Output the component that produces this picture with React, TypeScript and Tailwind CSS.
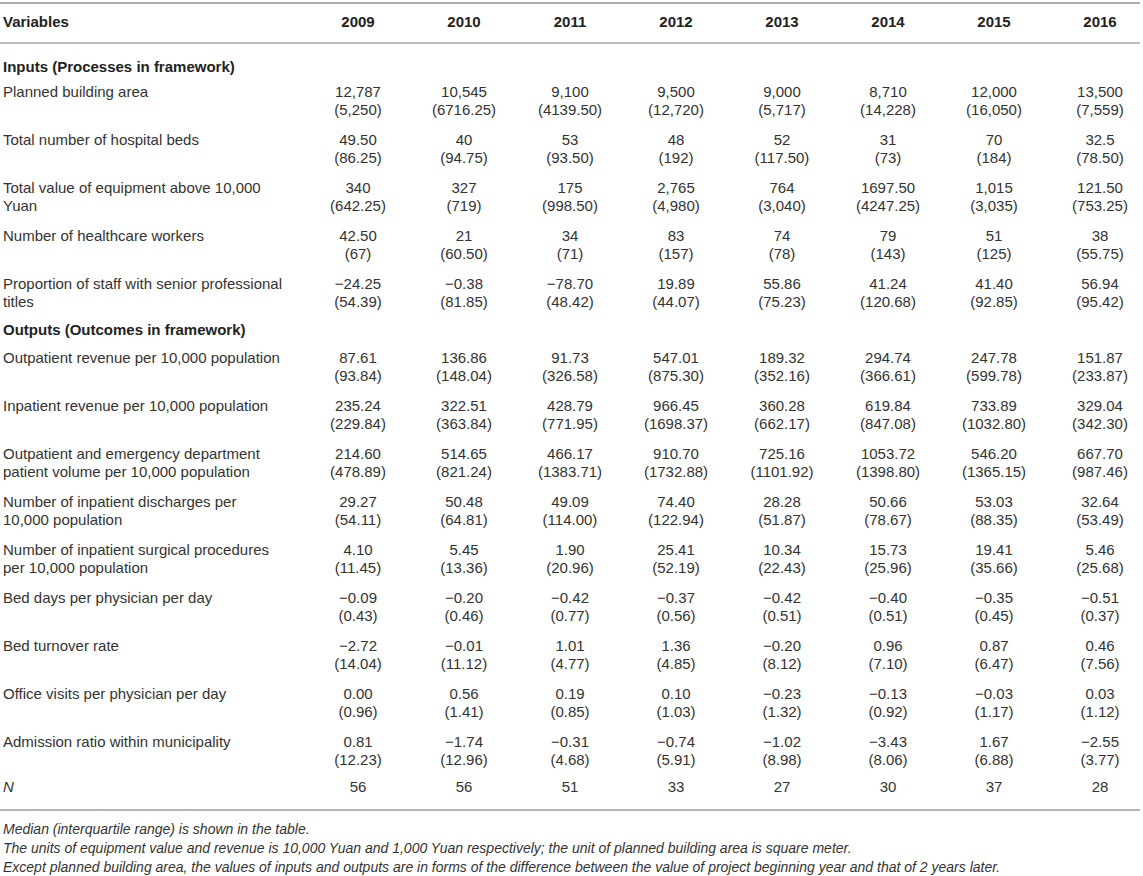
import React from "react";

type Row =
  | { kind: "section"; label: string; pt: string; pb: string }
  | { kind: "data"; label: string; v: [string, string][] }
  | { kind: "n"; label: string; v: string[] };

const years = ["2009", "2010", "2011", "2012", "2013", "2014", "2015", "2016"];

const rows: Row[] = [
  { kind: "section", label: "Inputs (Processes in framework)", pt: "pt-[14px]", pb: "pb-[1px]" },
  {
    kind: "data",
    label: "Planned building area",
    v: [["12,787", "(5,250)"], ["10,545", "(6716.25)"], ["9,100", "(4139.50)"], ["9,500", "(12,720)"], ["9,000", "(5,717)"], ["8,710", "(14,228)"], ["12,000", "(16,050)"], ["13,500", "(7,559)"]],
  },
  {
    kind: "data",
    label: "Total number of hospital beds",
    v: [["49.50", "(86.25)"], ["40", "(94.75)"], ["53", "(93.50)"], ["48", "(192)"], ["52", "(117.50)"], ["31", "(73)"], ["70", "(184)"], ["32.5", "(78.50)"]],
  },
  {
    kind: "data",
    label: "Total value of equipment above 10,000 Yuan",
    v: [["340", "(642.25)"], ["327", "(719)"], ["175", "(998.50)"], ["2,765", "(4,980)"], ["764", "(3,040)"], ["1697.50", "(4247.25)"], ["1,015", "(3,035)"], ["121.50", "(753.25)"]],
  },
  {
    kind: "data",
    label: "Number of healthcare workers",
    v: [["42.50", "(67)"], ["21", "(60.50)"], ["34", "(71)"], ["83", "(157)"], ["74", "(78)"], ["79", "(143)"], ["51", "(125)"], ["38", "(55.75)"]],
  },
  {
    kind: "data",
    label: "Proportion of staff with senior professional titles",
    v: [["\u221224.25", "(54.39)"], ["\u22120.38", "(81.85)"], ["\u221278.70", "(48.42)"], ["19.89", "(44.07)"], ["55.86", "(75.23)"], ["41.24", "(120.68)"], ["41.40", "(92.85)"], ["56.94", "(95.42)"]],
  },
  { kind: "section", label: "Outputs (Outcomes in framework)", pt: "pt-[4px]", pb: "pb-[4px]" },
  {
    kind: "data",
    label: "Outpatient revenue per 10,000 population",
    v: [["87.61", "(93.84)"], ["136.86", "(148.04)"], ["91.73", "(326.58)"], ["547.01", "(875.30)"], ["189.32", "(352.16)"], ["294.74", "(366.61)"], ["247.78", "(599.78)"], ["151.87", "(233.87)"]],
  },
  {
    kind: "data",
    label: "Inpatient revenue per 10,000 population",
    v: [["235.24", "(229.84)"], ["322.51", "(363.84)"], ["428.79", "(771.95)"], ["966.45", "(1698.37)"], ["360.28", "(662.17)"], ["619.84", "(847.08)"], ["733.89", "(1032.80)"], ["329.04", "(342.30)"]],
  },
  {
    kind: "data",
    label: "Outpatient and emergency department patient volume per 10,000 population",
    v: [["214.60", "(478.89)"], ["514.65", "(821.24)"], ["466.17", "(1383.71)"], ["910.70", "(1732.88)"], ["725.16", "(1101.92)"], ["1053.72", "(1398.80)"], ["546.20", "(1365.15)"], ["667.70", "(987.46)"]],
  },
  {
    kind: "data",
    label: "Number of inpatient discharges per 10,000 population",
    v: [["29.27", "(54.11)"], ["50.48", "(64.81)"], ["49.09", "(114.00)"], ["74.40", "(122.94)"], ["28.28", "(51.87)"], ["50.66", "(78.67)"], ["53.03", "(88.35)"], ["32.64", "(53.49)"]],
  },
  {
    kind: "data",
    label: "Number of inpatient surgical procedures per 10,000 population",
    v: [["4.10", "(11.45)"], ["5.45", "(13.36)"], ["1.90", "(20.96)"], ["25.41", "(52.19)"], ["10.34", "(22.43)"], ["15.73", "(25.96)"], ["19.41", "(35.66)"], ["5.46", "(25.68)"]],
  },
  {
    kind: "data",
    label: "Bed days per physician per day",
    v: [["\u22120.09", "(0.43)"], ["\u22120.20", "(0.46)"], ["\u22120.42", "(0.77)"], ["\u22120.37", "(0.56)"], ["\u22120.42", "(0.51)"], ["\u22120.40", "(0.51)"], ["\u22120.35", "(0.45)"], ["\u22120.51", "(0.37)"]],
  },
  {
    kind: "data",
    label: "Bed turnover rate",
    v: [["\u22122.72", "(14.04)"], ["\u22120.01", "(11.12)"], ["1.01", "(4.77)"], ["1.36", "(4.85)"], ["\u22120.20", "(8.12)"], ["0.96", "(7.10)"], ["0.87", "(6.47)"], ["0.46", "(7.56)"]],
  },
  {
    kind: "data",
    label: "Office visits per physician per day",
    v: [["0.00", "(0.96)"], ["0.56", "(1.41)"], ["0.19", "(0.85)"], ["0.10", "(1.03)"], ["\u22120.23", "(1.32)"], ["\u22120.13", "(0.92)"], ["\u22120.03", "(1.17)"], ["0.03", "(1.12)"]],
  },
  {
    kind: "data",
    label: "Admission ratio within municipality",
    v: [["0.81", "(12.23)"], ["\u22121.74", "(12.96)"], ["\u22120.31", "(4.68)"], ["\u22120.74", "(5.91)"], ["\u22121.02", "(8.98)"], ["\u22123.43", "(8.06)"], ["1.67", "(6.88)"], ["\u22122.55", "(3.77)"]],
  },
  { kind: "n", label: "N", v: ["56", "56", "51", "33", "27", "30", "37", "28"] },
];

const gridCls = "grid grid-cols-[305px_repeat(7,106px)_93px]";

function YearCell({ i, children }: { i: number; children: React.ReactNode }) {
  return <div className={i === 7 ? "pl-[13px] text-center" : "text-center"}>{children}</div>;
}

export default function App() {
  return (
    <div
      className="w-[1143px] bg-white text-[15px] leading-[18px] text-[#333]"
      style={{ fontFamily: '"Liberation Sans", Arial, Helvetica, sans-serif' }}
    >
      <div className="w-[1140px] pt-[2px]">
        {/* header */}
        <div className={`${gridCls} border-t-2 border-t-[#adadad] border-b-2 border-b-[#bdbdbd] pt-[9px] pb-[11px] font-bold text-[#222]`}>
          <div className="pl-[3px]">Variables</div>
          {years.map((y, i) => (
            <YearCell key={y} i={i}>
              {y}
            </YearCell>
          ))}
        </div>

        {rows.map((r, idx) => {
          if (r.kind === "section") {
            return (
              <div key={idx} className={`${r.pt} ${r.pb} pl-[3px] font-bold text-[#222]`}>
                {r.label}
              </div>
            );
          }
          if (r.kind === "n") {
            return (
              <div key={idx} className={`${gridCls} border-b-2 border-[#b5b5b5] pt-[3px] pb-[13px]`}>
                <div className="pl-[3px] italic">{r.label}</div>
                {r.v.map((v, i) => (
                  <YearCell key={i} i={i}>
                    {v}
                  </YearCell>
                ))}
              </div>
            );
          }
          return (
            <div key={idx} className={`${gridCls} py-[6px]`}>
              <div className="pl-[3px] pr-[21px]">{r.label}</div>
              {r.v.map((v, i) => (
                <YearCell key={i} i={i}>
                  <div>{v[0]}</div>
                  <div>{v[1]}</div>
                </YearCell>
              ))}
            </div>
          );
        })}

        <div className="pt-[9px] pl-[3px] text-[14px] leading-[19px] italic text-[#333]">
          <p>Median (interquartile range) is shown in the table.</p>
          <p>
            The units of equipment value and revenue is 10,000 Yuan and 1,000 Yuan respectively; the unit of planned
            building area is square meter.
          </p>
          <p>
            Except planned building area, the values of inputs and outputs are in forms of the difference between the
            value of project beginning year and that of 2 years later.
          </p>
        </div>
      </div>
    </div>
  );
}
